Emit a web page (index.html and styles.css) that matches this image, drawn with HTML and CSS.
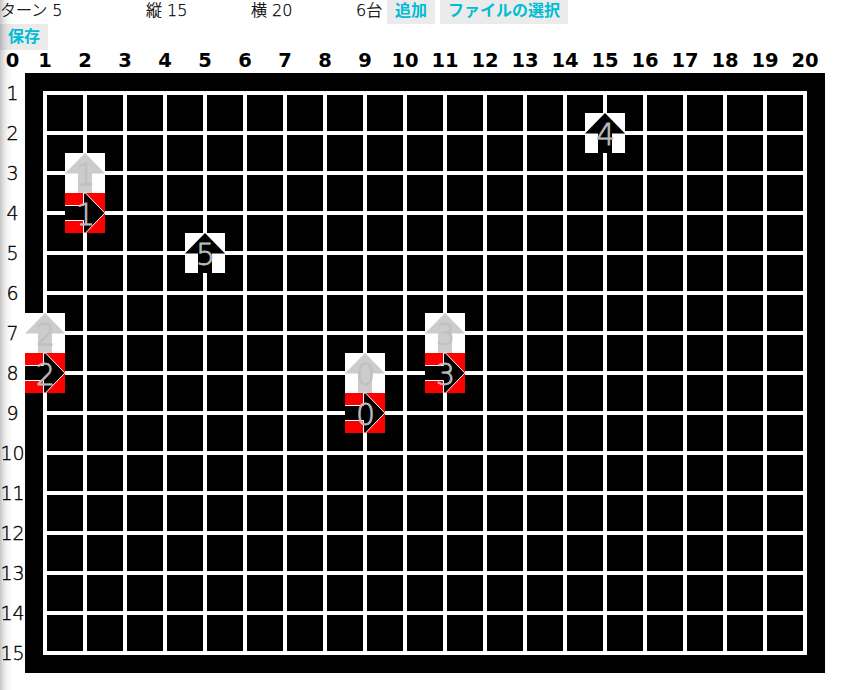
FILE: index.html
```html
<!DOCTYPE html>
<html lang="ja">
<head>
<meta charset="utf-8">
<title>ターン</title>
<link rel="stylesheet" href="styles.css">
</head>
<body>
<header class="toolbar">
  <span class="field turn">ターン 5</span><span class="field rows">縦 15</span><span class="field cols">横 20</span><span class="field count">6台</span><button class="btn add">追加</button><button class="btn file">ファイルの選択</button>
</header>
<div class="save-row"><button class="btn save">保存</button></div>
<div class="col-labels" id="cols"></div>
<main class="field-area">
  <div class="row-labels" id="rows"></div>
  <svg class="board" id="board" width="800" height="600" viewBox="0 0 800 600">
    <defs>
      <path id="up" d="M20 0 40 20.5H27V40H13V20.5H0Z"/>
      <g id="right"><rect width="40" height="40" fill="#f00"/><path d="M0 12.5H18.5V0H20.5L39.8 20 20.5 40H18.5V27.5H0" fill="#000" stroke="#fff"/></g>
    </defs>
    <rect width="800" height="600"/>
    <g id="grid" stroke="#fff" stroke-width="4" stroke-linecap="square"></g>
    <g id="cars"></g>
  </svg>
</main>
<script src="script.js"></script>
</body>
</html>
```

FILE: styles.css
```css
body { margin: 0; height: 690px; overflow: hidden; color: #000; background: linear-gradient(to right, #c4c4c4 0, #dedede 3px, #f4f4f4 7px, #fff 13px); font-family: "DejaVu Sans", "Noto Sans CJK JP", sans-serif; }
.toolbar { display: flex; height: 24px; font-size: 16px; line-height: 22px; white-space: nowrap; }
.field { flex: none; font-family: "DejaVu Sans", "Noto Sans CJK JP", sans-serif; font-weight: 300; -webkit-text-stroke: .25px #000; }
.turn { width: 146px; }
.rows { width: 105px; }
.cols { width: 105px; }
.count { width: 31px; }
.btn { flex: none; height: 24px; padding: 0 0 6px; border: 0; background: #ebebeb; color: #00bcd4; font: bold 16px/18px "Noto Sans CJK JP", sans-serif; white-space: nowrap; }
.add { width: 48px; margin-right: 5px; }
.file { width: 128px; }
.save { width: 48px; height: 26px; padding: 0 0 4px; display: block; background: rgba(0,0,0,.08); }
.save-row { height: 26px; }
.col-labels { display: grid; grid-template-columns: 25px repeat(20, 40px); height: 23px; text-align: center; font-weight: bold; font-size: 19.5px; line-height: 21px; }
.field-area { display: flex; }
.row-labels { width: 25px; height: 600px; display: grid; grid-template-rows: repeat(15, 40px); text-align: center; font-size: 19px; font-weight: 200; line-height: 40px; -webkit-text-stroke: .35px #000; }
.board { display: block; }
.number { fill: #bbb; stroke: #bbb; stroke-width: .8px; font-size: 30px; font-weight: 200; text-anchor: middle; }
.ghost { fill: #ccc; }
.ghost .number { fill: #c1c1c1; stroke: #c1c1c1; }
```

FILE: script.js
```js
const SVG = 'http://www.w3.org/2000/svg';
const el = (parent, name, attrs, text) => {
  const node = document.createElementNS(SVG, name);
  for (const key in attrs) node.setAttribute(key, attrs[key]);
  if (text !== undefined) node.textContent = text;
  return parent.appendChild(node);
};
const label = (id, value) => {
  const cell = document.createElement('div');
  cell.textContent = value;
  document.getElementById(id).appendChild(cell);
};
const grid = document.getElementById('grid');
for (let x = 0; x <= 20; x++) label('cols', x);
for (let y = 1; y <= 15; y++) {
  label('rows', y);
  el(grid, 'path', { d: `M20 ${y * 40 - 20}H780` });
}
for (let x = 1; x <= 20; x++) el(grid, 'path', { d: `M${x * 40 - 20} 20V580` });

const cars = document.getElementById('cars');
const draw = (x, y, id, dir, ghost) => {
  const back = el(cars, 'g', { transform: `translate(${x * 40 - 40} ${y * 40 - 40})` });
  if (dir === 'up') el(back, 'rect', { width: 40, height: 40, fill: '#fff' });
  const g = el(back, 'g', ghost ? { class: 'ghost' } : {});
  el(g, 'use', { href: '#' + dir });
  el(g, 'text', { class: 'number', x: 20.5, y: 31.5 }, id);
};
[[9, 8, 0], [2, 3, 1], [1, 7, 2], [11, 7, 3]].forEach(([x, y, id]) => {
  draw(x, y, id, 'up', true);
  draw(x, y + 1, id, 'right', false);
});
draw(15, 2, 4, 'up', false);
draw(5, 5, 5, 'up', false);
```
